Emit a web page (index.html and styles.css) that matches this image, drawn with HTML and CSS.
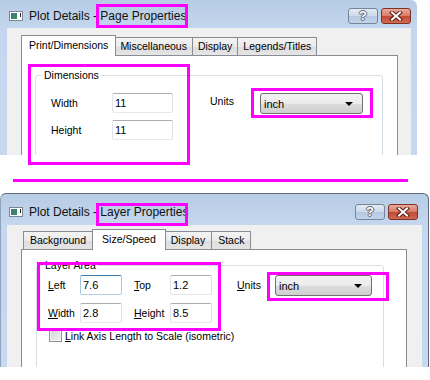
FILE: index.html
```html
<!DOCTYPE html>
<html lang="en">
<head>
    <meta charset="UTF-8">
    <title>Plot Details</title>
    <link rel="stylesheet" href="styles.css">
</head>
<body>
<div class="page">

    <div class="window win-page">
        <div class="titlebar">
            <svg class="app-icon" width="14" height="10" viewBox="0 0 14 10">
                <defs>
                    <linearGradient id="ic1" x1="0" y1="0" x2="1" y2="1">
                        <stop offset="0" stop-color="#4a6f8c"/>
                        <stop offset="1" stop-color="#2f8f5a"/>
                    </linearGradient>
                </defs>
                <rect x="0.5" y="0.5" width="13" height="9" fill="#fff" stroke="#7d8793"/>
                <rect x="2" y="2" width="6" height="6" fill="url(#ic1)"/>
                <rect x="11" y="2" width="1" height="4" fill="#222"/>
            </svg>
            <span class="title">Plot Details - Page Properties</span>
            <div class="caption-buttons">
                <span class="btn-help">?</span>
                <span class="btn-close">
                    <svg width="14" height="10" viewBox="0 0 14 10">
                        <path d="M3 1.5 L11 8.5 M11 1.5 L3 8.5" stroke="#5a1d16" stroke-width="4" stroke-linecap="square"/>
                        <path d="M3 1.5 L11 8.5 M11 1.5 L3 8.5" stroke="#fff" stroke-width="2" stroke-linecap="square"/>
                    </svg>
                </span>
            </div>
        </div>
        <div class="client">
            <div class="tabs">
                <div class="tab active">Print/Dimensions</div>
                <div class="tab">Miscellaneous</div>
                <div class="tab">Display</div>
                <div class="tab">Legends/Titles</div>
            </div>
            <div class="panel">
                <fieldset class="group">
                    <legend>Dimensions</legend>
                    <div class="dim-grid">
                        <span class="lbl">Width</span>
                        <input class="field" type="text" value="11">
                        <span class="lbl units-lbl">Units</span>
                        <div class="combo"><span>inch</span><i class="arrow"></i></div>
                        <span class="lbl">Height</span>
                        <input class="field" type="text" value="11">
                    </div>
                </fieldset>
            </div>
        </div>
    </div>

    <div class="separator"></div>

    <div class="window win-layer">
        <div class="titlebar">
            <svg class="app-icon" width="14" height="10" viewBox="0 0 14 10">
                <defs>
                    <linearGradient id="ic2" x1="0" y1="0" x2="1" y2="1">
                        <stop offset="0" stop-color="#4a6f8c"/>
                        <stop offset="1" stop-color="#2f8f5a"/>
                    </linearGradient>
                </defs>
                <rect x="0.5" y="0.5" width="13" height="9" fill="#fff" stroke="#7d8793"/>
                <rect x="2" y="2" width="6" height="6" fill="url(#ic2)"/>
                <rect x="11" y="2" width="1" height="4" fill="#222"/>
            </svg>
            <span class="title">Plot Details - Layer Properties</span>
            <div class="caption-buttons">
                <span class="btn-help">?</span>
                <span class="btn-close">
                    <svg width="14" height="10" viewBox="0 0 14 10">
                        <path d="M3 1.5 L11 8.5 M11 1.5 L3 8.5" stroke="#5a1d16" stroke-width="4" stroke-linecap="square"/>
                        <path d="M3 1.5 L11 8.5 M11 1.5 L3 8.5" stroke="#fff" stroke-width="2" stroke-linecap="square"/>
                    </svg>
                </span>
            </div>
        </div>
        <div class="client">
            <div class="tabs">
                <div class="tab">Background</div>
                <div class="tab active">Size/Speed</div>
                <div class="tab">Display</div>
                <div class="tab">Stack</div>
            </div>
            <div class="panel">
                <fieldset class="group">
                    <legend>Layer Area</legend>
                    <div class="size-grid">
                        <span class="lbl"><u>L</u>eft</span>
                        <input class="field focused" type="text" value="7.6">
                        <span class="lbl top-lbl"><u>T</u>op</span>
                        <input class="field" type="text" value="1.2">
                        <span class="lbl units2-lbl"><u>U</u>nits</span>
                        <div class="combo"><span>inch</span><i class="arrow"></i></div>
                        <span class="lbl"><u>W</u>idth</span>
                        <input class="field" type="text" value="2.8">
                        <span class="lbl top-lbl"><u>H</u>eight</span>
                        <input class="field" type="text" value="8.5">
                    </div>
                    <label class="check-row">
                        <span class="check"></span>
                        <span><u>L</u>ink Axis Length to Scale (isometric)</span>
                    </label>
                </fieldset>
            </div>
        </div>
    </div>

    <!-- highlight boxes drawn over the screenshots -->
    <div class="mark mark-title1"></div>
    <div class="mark mark-dims"></div>
    <div class="mark mark-units1"></div>
    <div class="mark mark-title2"></div>
    <div class="mark mark-area"></div>
    <div class="mark mark-units2"></div>
</div>
</body>
</html>
```

FILE: styles.css
```css
* {
    box-sizing: border-box;
}

body {
    margin: 0;
    background: #fff;
    font-family: "Liberation Sans", Arial, sans-serif;
    font-size: 10.5px;
    color: #000;
}

.page {
    position: relative;
    width: 430px;
    height: 380px;
    overflow: hidden;
}

/* window frame */
.window {
    display: flex;
    flex-direction: column;
    overflow: hidden;
    background: linear-gradient(#b7cce5, #c4d7ee 32px, #c6d9ef);
}

.win-page {
    width: 417px;
    height: 155px;
    border-top-right-radius: 6px;
}

.win-layer {
    width: 429px;
    height: 174px;
    margin-top: 11px;
    border: 1px solid #5d6b7c;
    border-bottom: none;
    border-left-color: #8ea3bb;
    border-radius: 6px 6px 0 0;
}

.titlebar {
    display: flex;
    align-items: center;
    height: 28px;
    padding: 4px 0 0 9px;
    flex-shrink: 0;
}

.win-layer .titlebar {
    height: 31px;
    padding: 4px 0 0 8px;
}

.app-icon {
    margin-right: 6px;
}

.title {
    font-size: 12px;
    color: #111;
}

.caption-buttons {
    display: flex;
    gap: 3px;
    margin-left: auto;
    margin-right: 6px;
}

.win-layer .caption-buttons {
    margin-right: 10px;
}

.btn-help,
.btn-close {
    display: flex;
    align-items: center;
    justify-content: center;
    width: 30px;
    height: 16px;
    border-radius: 3px;
}

.btn-help {
    border: 1px solid #76859a;
    background: linear-gradient(#e3ebf5, #cdd9e9 50%, #b5c8e0 51%, #c3d4e9);
    color: #fff;
    font-size: 13px;
    font-weight: bold;
    text-shadow: -1px 0 #5c6470, 1px 0 #5c6470, 0 -1px #5c6470, 0 1px #5c6470;
    line-height: 14px;
}

.btn-close {
    border: 1px solid #7d3128;
    background: linear-gradient(#e9a99b, #d77a66 50%, #c24a35 51%, #d0684f);
}

/* client area */
.client {
    flex: 1;
    display: flex;
    flex-direction: column;
    margin: 0 6px 0 7px;
    padding: 7px 13px 0 14px;
    background: #f0f0f0;
    overflow: hidden;
}

.win-layer .client {
    margin-left: 6px;
    padding: 4px 15px 0 14px;
}

.tabs {
    display: flex;
    align-items: flex-end;
    padding-left: 2px;
    height: 20px;
    flex-shrink: 0;
}

.tab {
    height: 18px;
    padding: 0 5px;
    margin-right: -1px;
    line-height: 17px;
    border: 1px solid #898c95;
    border-bottom: none;
    background: linear-gradient(#f3f3f3, #ebebeb 50%, #dddddd 51%, #e5e5e5);
    white-space: nowrap;
}

.tab.active {
    position: relative;
    z-index: 1;
    height: 21px;
    margin: 0 -2px -1px -2px;
    padding: 0 7px;
    line-height: 19px;
    background: #fff;
}

.win-layer .tab {
    padding: 0 6px;
}

.win-layer .tab.active {
    margin-left: 0;
    padding: 0 9px;
}

.panel {
    height: 200px;
    flex-shrink: 0;
    background: #fff;
    border: 1px solid #898c95;
}

/* group box */
.group {
    margin: 12px 0 0 13px;
    padding: 0 0 0 15px;
    width: 348px;
    height: 140px;
    border: 1px solid #d5dfe5;
    border-radius: 3px;
}

.group legend {
    margin-left: -9px;
    padding: 0 2px;
    line-height: 14px;
}

.win-layer .group {
    margin: 8px 0 0 14px;
    padding: 0 0 0 11px;
}

.win-layer .group legend {
    margin-left: -5px;
}

.lbl {
    align-self: center;
    white-space: nowrap;
}

.dim-grid {
    display: grid;
    grid-template-columns: 61px 61px 37px 50px 103px;
    grid-auto-rows: 20px;
    row-gap: 7px;
    margin-top: 11px;
}

.units-lbl {
    grid-column: 4;
    align-self: start;
    padding-top: 2px;
}

.size-grid {
    display: grid;
    grid-template-columns: 32px 42px 12px 36px 42px 25px 38px 97px;
    grid-auto-rows: 20px;
    row-gap: 8px;
    margin-top: 3px;
}

.top-lbl {
    grid-column: 4;
}

.units2-lbl {
    grid-column: 7;
}

/* edit box */
.field {
    width: 100%;
    height: 20px;
    margin: 0;
    padding: 0 2px;
    font-family: inherit;
    font-size: 11px;
    color: #000;
    background: #fff;
    border: 1px solid;
    border-color: #abadb3 #dbdfe6 #e3e9ef #e2e3ea;
    border-radius: 2px;
    outline: none;
}

.field.focused {
    border-color: #3d7bad #a4c9e3 #b5cfe7 #a4c9e3;
}

/* drop-down list */
.combo {
    display: flex;
    align-items: center;
    justify-content: space-between;
    height: 21px;
    padding: 0 9px 0 3px;
    border: 1px solid #707070;
    border-radius: 3px;
    font-size: 11px;
    background: linear-gradient(#f2f2f2, #ebebeb 50%, #dddddd 51%, #cfcfcf);
}

.arrow {
    width: 0;
    height: 0;
    border-left: 4px solid transparent;
    border-right: 4px solid transparent;
    border-top: 4px solid #000;
}

.check-row {
    display: flex;
    align-items: center;
    gap: 3px;
    margin-top: 6px;
    margin-left: 1px;
}

.check {
    width: 13px;
    height: 13px;
    border: 1px solid #8e8f8f;
    background: linear-gradient(135deg, #cfd2d6, #f2f2f2);
    box-shadow: inset 0 0 0 1px #f4f4f4;
}

.separator {
    width: 395px;
    height: 3px;
    margin: 24px 0 0 13px;
    background: #ff00ff;
}

/* magenta highlights */
.mark {
    position: absolute;
    border: 3px solid #ff00ff;
}

.mark-title1 {
    left: 96px;
    top: 4px;
    width: 92px;
    height: 24px;
}

.mark-dims {
    left: 28px;
    top: 64px;
    width: 162px;
    height: 101px;
}

.mark-units1 {
    left: 251px;
    top: 88px;
    width: 122px;
    height: 30px;
}

.mark-title2 {
    left: 96px;
    top: 203px;
    width: 92px;
    height: 23px;
}

.mark-area {
    left: 37px;
    top: 262px;
    width: 184px;
    height: 69px;
}

.mark-units2 {
    left: 267px;
    top: 272px;
    width: 122px;
    height: 29px;
}
```
